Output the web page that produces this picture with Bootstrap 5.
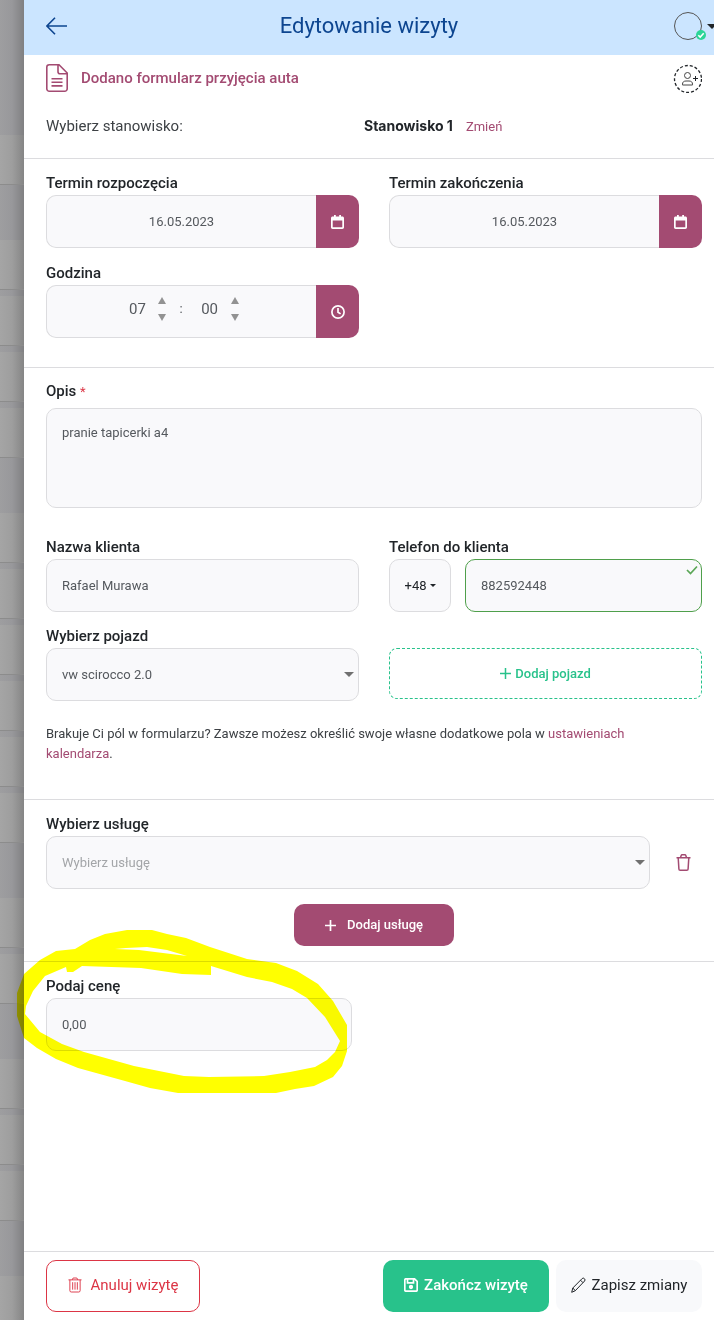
<!DOCTYPE html>
<html lang="pl">
<head>
<meta charset="utf-8">
<meta name="viewport" content="width=device-width, initial-scale=1">
<title>Edytowanie wizyty</title>
<link href="https://cdn.jsdelivr.net/npm/bootstrap@5.3.0/dist/css/bootstrap.min.css" rel="stylesheet">
<style>
  :root { --plum: #a34b72; --field: #f9f9fb; --line: #dcdcdf; --green: #28c28b; --cancel: #dc3545; }
  body { font-family: Roboto, sans-serif; font-size: 14px; line-height: 20px; color: #212529; }
  a { color: var(--plum); text-decoration: none; }
  svg { display: block; flex: none; }

  /* dimmed calendar behind the panel */
  .backdrop-list { width: 24px; background: linear-gradient(90deg, #9e9ea0, #98989b 50%, #808082); }
  .day-head { height: 55px; }
  .day-head.first { height: 135px; }
  .slots { display: flex; flex-direction: column; gap: 6px; }
  .slots.rest, .slots.rest .slot { flex: 1; }
  .slot { height: 50px; background: linear-gradient(90deg, #a5a5a5, #9e9e9e 50%, #858585); border-bottom: 1px solid #8c8c8c; }

  /* top bar */
  .panel-head { height: 55px; background: #cbe5ff; color: #0d4590; padding: 0 22px 3px; }
  .panel-head h1 { font-size: 22px; line-height: 28px; font-weight: 400; }
  .side-box { width: 64px; }
  .account { padding-left: 46px; }
  .account .btn { gap: 5px; }
  .avatar { width: 28px; height: 28px; border: 1px solid #555; }
  .avatar svg { position: absolute; right: -5px; bottom: -1px; }
  .caret { border: 5px solid transparent; border-top-color: #212529; border-bottom: 0; }
  .small-caret { border-width: 3px 3px 0; margin-left: 3px; }

  /* sections */
  .block { padding: 12px 12px 0 22px; border-top: 1px solid var(--line); }
  .block.plain { border-top: 0; padding: 8px 12px 21px 22px; }
  .dates { padding-bottom: 29px; }
  .details { padding-top: 11px; padding-bottom: 35px; }
  .services { padding-bottom: 15px; }
  .row.wide { --bs-gutter-x: 30px; --bs-gutter-y: 13px; }
  .form-link { gap: 13px; font-size: 15px; font-weight: 500; }
  .assign { width: 30px; height: 30px; padding: 0; border: 0; background: none; color: #212529; }
  .station { padding-top: 23px; }
  .station strong { font-family: Inter, sans-serif; font-size: 14px; font-weight: 700; margin-left: -25px; margin-right: 13px; }
  .station a { font-size: 13px; }
  .pick-label { font-size: 15px; color: #3d4145; }

  /* fields */
  .lbl { display: block; font-size: 15px; line-height: 24px; font-weight: 500; }
  .lbl small { font-size: 13px; font-weight: 400; }
  .field { height: 53px; padding: 0 15px; font-size: 13px; color: #55595e; background-color: var(--field); border: 1px solid var(--line); border-radius: 10px; }
  textarea.field { height: 100px; padding-top: 14px; margin-top: 4px; resize: none; }
  .field.ok { border-color: #4f9f4b; }
  .tick { position: absolute; right: 4px; top: 6px; }
  .field.pick { appearance: none; background-image: url("data:image/svg+xml,%3Csvg xmlns='http://www.w3.org/2000/svg' width='10' height='5'%3E%3Cpath d='M0 0h10L5 5z' fill='%23707070'/%3E%3C/svg%3E"); background-repeat: no-repeat; background-position: right 4px center; background-size: 10px 5px; }
  .field.hint { color: #a3a5a8; }
  .addon { width: 43px; padding: 0; border: 0; border-radius: 0 10px 10px 0; background: var(--plum); color: #fff; display: flex; align-items: center; justify-content: center; }
  .clock { padding: 0 18px 6px 15px; }
  .clock-num { width: 32px; padding: 0; border: 0; background: none; text-align: center; font-size: 15px; color: #55595e; }
  .spins { gap: 10px; margin-left: 5px; }
  .spin { border: 0; padding: 0; background: none; width: 8px; height: 7px; color: #929292; }
  .colon { margin: 0 11px 0 13px; }
  .client { padding-top: 27px; }
  .row.client { margin-top: 0; }
  .row.client > * { margin-top: 0; margin-bottom: 12px; }
  .phone-line { gap: 14px; }
  .prefix { width: 62px; padding: 0; color: #212529; }
  .add-car { height: 51px; border: 1px dashed var(--green); border-radius: 8px; background: none; color: var(--green); font-size: 13px; font-weight: 500; }
  .note { font-size: 13px; color: #3d4145; padding: 11px 40px 0 0; }
  .trash { margin: 0 11px 0 26px; }
  .add-line { padding-top: 15px; }
  .price { width: 306px; max-width: 100%; }
  .marker { position: absolute; left: -7px; top: -32px; mix-blend-mode: multiply; pointer-events: none; }

  /* actions */
  .act { border-radius: 10px; }
  .act-service { width: 160px; height: 42px; gap: 11px; background: var(--plum); color: #fff; border: 0; font-size: 13px; font-weight: 500; }
  .bottom { border-top: 1px solid var(--line); padding: 8px 12px 8px 22px; gap: 7px; }
  .bottom .act { height: 52px; padding-bottom: 3px; font-size: 15px; }
  .act-cancel { width: 154px; gap: 9px; border: 1px solid var(--cancel); color: var(--cancel); background: #fff; }
  .act-done { width: 166px; gap: 6px; border: 0; background: var(--green); color: #fff; font-weight: 500; }
  .act-save { width: 146px; gap: 6px; border: 0; background: #f8f9fb; color: #212529; }
</style>
</head>
<body>
<div class="d-flex min-vh-100">
  <div class="backdrop-list d-flex flex-column flex-shrink-0" aria-hidden="true">
    <div class="day-head first"></div>
    <div class="slots"><div class="slot"></div></div>
    <div class="day-head"></div>
    <div class="slots"><div class="slot"></div><div class="slot"></div><div class="slot"></div><div class="slot"></div></div>
    <div class="day-head"></div>
    <div class="slots"><div class="slot"></div><div class="slot"></div><div class="slot"></div><div class="slot"></div><div class="slot"></div><div class="slot"></div></div>
    <div class="day-head"></div>
    <div class="slots"><div class="slot"></div><div class="slot"></div></div>
    <div class="day-head"></div>
    <div class="slots"><div class="slot"></div><div class="slot"></div><div class="slot"></div></div>
    <div class="day-head"></div>
    <div class="slots rest"><div class="slot h-auto border-0"></div></div>
  </div>

  <main class="flex-grow-1 bg-white d-flex flex-column">
    <header class="panel-head d-flex align-items-center justify-content-between overflow-hidden">
      <div class="side-box">
        <a href="#" aria-label="Wstecz" class="d-block text-reset">
          <svg width="21" height="18" viewBox="0 0 21 18" fill="none" stroke="currentColor" stroke-width="1.6"><path d="M9 .7.9 9 9 17.300M1 9h20"/></svg>
        </a>
      </div>
      <h1 class="m-0">Edytowanie wizyty</h1>
      <div class="side-box account">
        <button type="button" class="btn p-0 border-0 d-flex align-items-center" aria-label="Konto">
          <span class="avatar rounded-circle position-relative flex-shrink-0">
            <svg width="10" height="10" viewBox="0 0 10 10"><circle cx="5" cy="5" r="5" fill="#2bd597"/><path d="m2.300 5.200 1.900 1.900 3.500-3.800" fill="none" stroke="#fff" stroke-width="1.500"/></svg>
          </span>
          <span class="caret"></span>
        </button>
      </div>
    </header>

    <section class="block plain">
      <div class="d-flex align-items-center justify-content-between">
        <a href="#" class="form-link d-flex align-items-center">
          <svg width="22" height="28" viewBox="0 0 22 28" fill="none" stroke="currentColor" stroke-width="1.600"><path d="M13 .8H3.300A2.500 2.500 0 0 0 .8 3.300v21.400a2.500 2.500 0 0 0 2.500 2.500h15.400a2.500 2.500 0 0 0 2.500-2.500V9zM12 .8v7a2 2 0 0 0 2 2h7M5.500 14.700h11M5.500 18.300h11M5.500 21.900h11"/></svg>
          <span>Dodano formularz przyjęcia auta</span>
        </a>
        <button type="button" class="assign" aria-label="Przypisz osobę">
          <svg width="30" height="30" viewBox="0 0 30 30" fill="none" stroke="currentColor"><circle cx="16" cy="16" r="13.500" stroke-width="1.300" stroke-dasharray="3 2"/><g stroke="#444"><circle cx="15.500" cy="12.500" r="3"/><path d="M10.500 22v-.8c0-2.200 1.400-3.200 3.500-3.200h3c2.100 0 3.500 1 3.500 3.200v.8z"/></g><path d="M21 15.500h5M23.500 13v5"/></svg>
        </button>
      </div>
      <div class="row wide station">
        <div class="col-6"><span class="pick-label">Wybierz stanowisko:</span></div>
        <div class="col-6"><strong>Stanowisko 1</strong><a href="#">Zmień</a></div>
      </div>
    </section>

    <section class="block dates">
      <div class="row wide">
        <div class="col-6">
          <label class="lbl" for="from">Termin rozpoczęcia</label>
          <div class="d-flex">
            <input id="from" class="field form-control text-center rounded-end-0 border-end-0" value="16.05.2023">
            <button type="button" class="addon flex-shrink-0" aria-label="Kalendarz"><svg width="13" height="14" viewBox="0 0 13 14" fill="currentColor"><path fill-rule="evenodd" d="M3 0h1.800v1.500h3.400V0H10v1.500h1.300c1 0 1.700.7 1.700 1.700v9.100c0 1-.7 1.700-1.700 1.700H1.700C.7 14 0 13.300 0 12.300V3.200c0-1 .7-1.700 1.700-1.700H3zM1.700 5.500v6.700h9.600V5.500z"/></svg></button>
          </div>
        </div>
        <div class="col-6">
          <label class="lbl" for="to">Termin zakończenia</label>
          <div class="d-flex">
            <input id="to" class="field form-control text-center rounded-end-0 border-end-0" value="16.05.2023">
            <button type="button" class="addon flex-shrink-0" aria-label="Kalendarz"><svg width="13" height="14" viewBox="0 0 13 14" fill="currentColor"><path fill-rule="evenodd" d="M3 0h1.800v1.500h3.400V0H10v1.500h1.300c1 0 1.700.7 1.700 1.700v9.100c0 1-.7 1.700-1.700 1.700H1.700C.7 14 0 13.300 0 12.300V3.200c0-1 .7-1.700 1.700-1.700H3zM1.700 5.500v6.700h9.600V5.500z"/></svg></button>
          </div>
        </div>
        <div class="col-6">
          <label class="lbl" for="hour">Godzina</label>
          <div class="d-flex">
            <div class="field clock flex-grow-1 rounded-end-0 border-end-0 d-flex justify-content-center align-items-center">
              <input id="hour" class="clock-num" value="07">
              <div class="d-flex flex-column spins">
                <button type="button" class="spin" aria-label="Godzina w górę"><svg width="8" height="7" viewBox="0 0 8 7"><path d="M4 0l4 7H0z" fill="currentColor"/></svg></button>
                <button type="button" class="spin" aria-label="Godzina w dół"><svg width="8" height="7" viewBox="0 0 8 7"><path d="M4 7l4-7H0z" fill="currentColor"/></svg></button>
              </div>
              <span class="colon">:</span>
              <input class="clock-num" value="00" aria-label="Minuty">
              <div class="d-flex flex-column spins">
                <button type="button" class="spin" aria-label="Minuty w górę"><svg width="8" height="7" viewBox="0 0 8 7"><path d="M4 0l4 7H0z" fill="currentColor"/></svg></button>
                <button type="button" class="spin" aria-label="Minuty w dół"><svg width="8" height="7" viewBox="0 0 8 7"><path d="M4 7l4-7H0z" fill="currentColor"/></svg></button>
              </div>
            </div>
            <button type="button" class="addon flex-shrink-0" aria-label="Zegar"><svg width="14" height="14" viewBox="0 0 14 14" fill="none" stroke="currentColor" stroke-width="1.700"><circle cx="7" cy="7" r="6.100"/><path d="M7 3v4.200l2.600 1.700"/></svg></button>
          </div>
        </div>
      </div>
    </section>

    <section class="block details">
      <label class="lbl" for="desc">Opis <small class="text-danger">*</small></label>
      <textarea id="desc" class="field form-control">pranie tapicerki a4</textarea>
      <div class="row wide client">
        <div class="col-6">
          <label class="lbl" for="client">Nazwa klienta</label>
          <input id="client" class="field form-control" value="Rafael Murawa">
        </div>
        <div class="col-6">
          <label class="lbl" for="phone">Telefon do klienta</label>
          <div class="d-flex phone-line">
            <button type="button" class="field prefix flex-shrink-0 d-flex align-items-center justify-content-center">+48<span class="caret small-caret"></span></button>
            <div class="position-relative flex-grow-1">
              <input id="phone" class="field form-control ok" value="882592448">
              <svg class="tick" width="12" height="10" viewBox="0 0 12 10" fill="none" stroke="#5aa656" stroke-width="1.700"><path d="M1 5l3.500 3.500L11 1.500"/></svg>
            </div>
          </div>
        </div>
        <div class="col-6">
          <label class="lbl" for="car">Wybierz pojazd</label>
          <select id="car" class="field pick w-100"><option>vw scirocco 2.0</option></select>
        </div>
        <div class="col-6 pt-4">
          <button type="button" class="add-car w-100 d-flex align-items-center justify-content-center"><svg class="me-1" width="11" height="11" viewBox="0 0 11 11" stroke="currentColor" stroke-width="1.500"><path d="M5.500 0v11M0 5.500h11"/></svg>Dodaj pojazd</button>
        </div>
      </div>
      <p class="note mb-0">Brakuje Ci pól w formularzu? Zawsze możesz określić swoje własne dodatkowe pola w <a href="#">ustawieniach kalendarza</a>.</p>
    </section>

    <section class="block services">
      <label class="lbl" for="service">Wybierz usługę</label>
      <div class="d-flex align-items-center">
        <select id="service" class="field pick hint flex-grow-1"><option>Wybierz usługę</option></select>
        <button type="button" class="btn trash border-0 p-0 flex-shrink-0" aria-label="Usuń usługę"><svg width="15" height="17" viewBox="0 0 15 17" fill="none" stroke="#a34b72" stroke-width="1.500"><path d="M.5 3.700h14M4.500 3.500l.8-2.200q.2-.5.700-.5h3q.5 0 .7.500l.8 2.200M2.200 3.700l.7 11.200c0 .8.600 1.300 1.300 1.300h6.600c.7 0 1.300-.5 1.300-1.300l.7-11.200"/></svg></button>
      </div>
      <div class="d-flex justify-content-center add-line">
        <button type="button" class="act act-service d-flex align-items-center justify-content-center"><svg width="11" height="11" viewBox="0 0 11 11" stroke="currentColor" stroke-width="1.700"><path d="M5.500 0v11M0 5.500h11"/></svg>Dodaj usługę</button>
      </div>
    </section>

    <section class="block position-relative">
      <label class="lbl" for="price">Podaj cenę</label>
      <input id="price" class="field form-control price" value="0,00">
      <svg class="marker" width="334" height="166" viewBox="17 930 334 166" aria-hidden="true"><path fill="#ff0" fill-rule="evenodd" d="M75 949 L90 940 105 934 127 930 152 930 167 934 186 938 210 947 247 959 276 963 297 971 318 984 333 1001 347 1025 347 1051 342 1066 333 1077 314 1086 295 1089 276 1093 178 1093 150 1088 125 1081 78 1068 56 1059 37 1048 24 1038 17 1016 17 993 24 974 40 960 56 951zM115 949 139 950 187 956 167 950 147 947 126 948zM211 966 211 975 182 974 141 968 82 966 73 972 67 972 66 967 45 976 33 991 26 1006 25 1014 40 1032 62 1044 84 1052 134 1066 184 1076 209 1077 264 1076 290 1072 315 1067 327 1060 335 1052 340 1041 325 1017 307 998 292 989 272 982 247 977z"/></svg>
    </section>

    <footer class="bottom mt-auto d-flex">
      <button type="button" class="act act-cancel d-flex align-items-center justify-content-center me-auto"><svg width="14" height="16" viewBox="0 0 15 16" fill="none" stroke="currentColor"><path d="M.5 2.500h14M4.500 2.500l1-2h4l1 2M2 2.500v11.500q0 1.500 1.500 1.500h8q1.500 0 1.500-1.500V2.500M5 5v8M7.500 5v8M10 5v8"/></svg>Anuluj wizytę</button>
      <button type="button" class="act act-done d-flex align-items-center justify-content-center"><svg width="14" height="14" viewBox="0 0 14 14" fill="none" stroke="currentColor" stroke-width="1.700"><path d="M2 .8h8.500L13.200 3.500V12q0 1.200-1.200 1.200H2Q.8 13.200.8 12V2Q.8.8 2 .8zM3.500 1v3.800h6V1"/><circle cx="7" cy="9" r="1.300" fill="currentColor"/></svg>Zakończ wizytę</button>
      <button type="button" class="act act-save d-flex align-items-center justify-content-center"><svg width="15" height="16" viewBox="0 0 15 16" fill="none" stroke="currentColor"><path d="M.7 15.300 1.800 11 11.200 1.500q1-1 2.200.2t.2 2.300L4.300 13.700zM9.500 3.200l2.500 2.500M1.800 11l2.500 2.700"/></svg>Zapisz zmiany</button>
    </footer>
  </main>
</div>
<script src="https://cdn.jsdelivr.net/npm/bootstrap@5.3.0/dist/js/bootstrap.bundle.min.js"></script>
</body>
</html>
